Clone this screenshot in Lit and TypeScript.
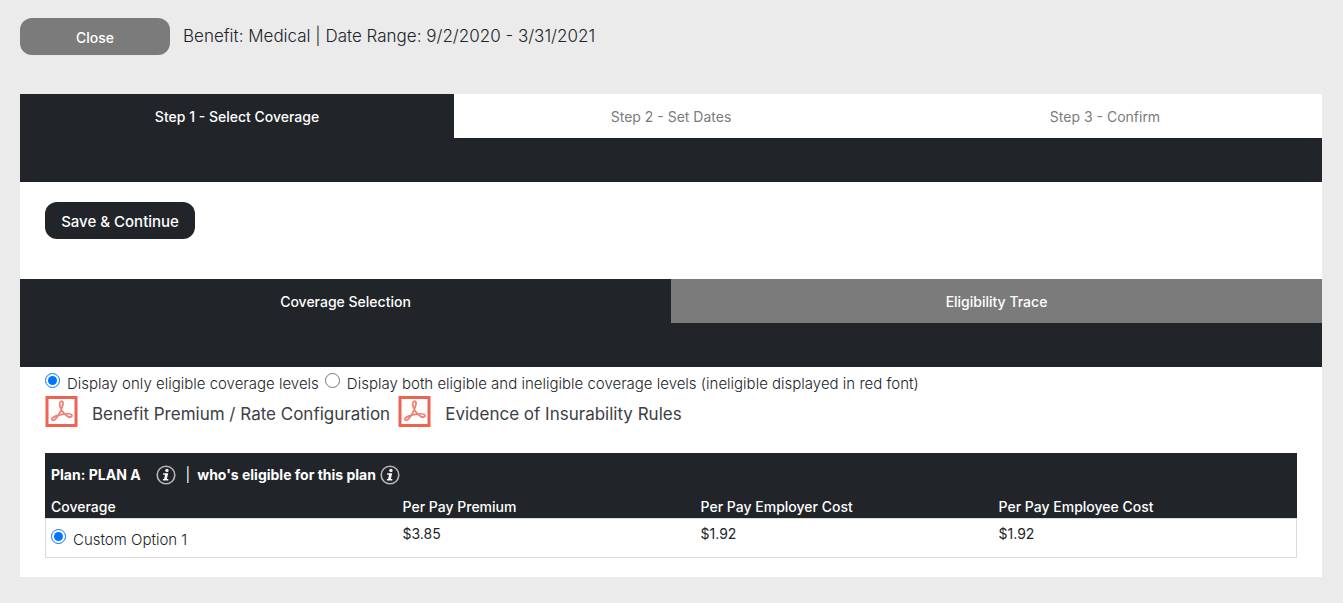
import { LitElement, html, css } from "lit";
import { customElement, state } from "lit/decorators.js";

const infoIcon = html`<svg class="info-icon" viewBox="0 0 20 20" role="img" aria-label="Information">
  <circle cx="10" cy="10" r="8.8" fill="none" stroke="#b4b6b8" stroke-width="1.6" />
  <circle cx="10.9" cy="5.4" r="1.7" fill="#fff" />
  <path d="M7.2 8.200h5l-1.400 5.700h1.500v1.500H6.900v-1.500h1.200l1-4.200H7.200z" fill="#fff" />
</svg>`;

const pdfIcon = html`<svg class="pdf-icon" viewBox="0 0 32 31" aria-hidden="true">
  <rect x="1.5" y="1.5" width="29" height="28" fill="#fff" stroke="#ee6352" stroke-width="3" />
  <path
    d="M15.400 5.500c1.500-.8 2.500.6 2.100 2.700-.8 4.500-4.300 11.700-7.700 15-1.500 1.500-3.300 1.400-3.500.2-.2-1.900 4.400-3.900 9.200-4.800 4.600-.9 10-1.200 10.800.5.700 1.700-1.500 2.600-3.800 1.500-4-1.900-7.700-7.800-8.300-11.700-.2-1.500.2-2.900 1.200-3.400z"
    fill="none" stroke="#f08073" stroke-width="1.8" />
</svg>`;

@customElement("app-root")
export class AppRoot extends LitElement {
  @state() private steps = ["Step 1 - Select Coverage", "Step 2 - Set Dates", "Step 3 - Confirm"];
  @state() private rows = [{ name: "Custom Option 1", costs: ["$3.85", "$1.92", "$1.92"] }];

  static styles = css`
    :host {
      display: block;
      box-sizing: border-box;
      min-height: 100vh;
      padding: 18px 21px 26px 20px;
      background: #ebebeb;
      color: #212529;
      font-family: Inter, "Open Sans", sans-serif;
      font-size: 14px;
      line-height: 20px;
    }
    * { box-sizing: border-box; }
    button { font: inherit; border: 0; margin: 0; cursor: pointer; }
    .top { display: flex; gap: 13px; margin-bottom: 39px; }
    .heading { margin: 0; font-size: 17px; font-weight: 300; line-height: 36px; }
    .action {
      width: 150px;
      height: 37px;
      padding: 2px 0 0;
      border-radius: 12px;
      background: #212529;
      color: #fff;
      font-size: 15px;
      font-weight: 500;
    }
    .close { background: #7b7b7b; font-size: 14px; }
    .panel { background: #fff; padding-bottom: 19px; }
    .tabs { display: flex; background: #212529; padding-bottom: 44px; }
    .tab {
      flex: 1;
      height: 44px;
      padding: 2px 0 0;
      background: #fff;
      color: #7b7b7b;
    }
    .tab.muted { background: #7b7b7b; color: #fff; font-weight: 500; }
    .tab.active { background: #212529; color: #fff; font-weight: 500; }
    .save { padding: 20px 25px 40px; }
    .content { padding: 4px 25px 0; }
    .choices { display: flex; height: 25px; gap: 6px; }
    .choice { display: flex; gap: 7px; font-size: 15px; font-weight: 300; }
    .choice span { padding-top: 3px; }
    input[type="radio"] { flex: none; width: 15px; height: 15px; margin: 2px 0 0; accent-color: #0075ff; }
    .links { display: flex; gap: 8px; margin-bottom: 26px; }
    .links a {
      display: flex;
      gap: 14px;
      color: #3c4045;
      text-decoration: none;
      font-size: 17px;
      font-weight: 400;
      line-height: 36px;
      height: 31px;
    }
    .pdf-icon { width: 33px; height: 31px; }
    table { width: 100%; border-collapse: separate; border-spacing: 0; table-layout: fixed; }
    .c1 { width: 28%; }
    .c2 { width: 298px; }
    thead { background: #212529; color: #fff; }
    th { padding: 0 7px; text-align: left; font-weight: 500; height: 23px; line-height: 23px; }
    th:first-child { padding-left: 6px; }
    .plan { height: 42px; font-weight: 700; }
    .plan-line { display: flex; align-items: center; }
    .plan-line .sep { margin: 0 7px 0 10px; font-weight: 400; }
    .info-icon { width: 20px; height: 20px; margin-top: 2px; }
    .name { margin-right: 15px; }
    .who { margin-right: 4px; }
    td {
      padding: 5px 7px;
      height: 40px;
      vertical-align: top;
      border: solid #dcdcdc;
      border-width: 1px 0;
    }
    td:first-child { border-left-width: 1px; padding-left: 5px; }
    td:last-child { border-right-width: 1px; }
    td .choice { padding-top: 3px; }
  `;

  render() {
    return html`
      <header class="top">
        <button class="action close" type="button">Close</button>
        <h1 class="heading">Benefit: Medical | Date Range: 9/2/2020 - 3/31/2021</h1>
      </header>
      <main class="panel">
        <nav class="tabs" aria-label="Steps">
          ${this.steps.map((s, i) => html`<button type="button" class="tab ${i === 0 ? "active" : ""}">${s}</button>`)}
        </nav>
        <div class="save"><button class="action" type="button">Save &amp; Continue</button></div>
        <nav class="tabs" aria-label="Coverage">
          <button type="button" class="tab active">Coverage Selection</button>
          <button type="button" class="tab muted">Eligibility Trace</button>
        </nav>
        <section class="content">
          <div class="choices">
            <label class="choice"><input type="radio" name="display" checked /><span>Display only eligible coverage levels</span></label>
            <label class="choice"><input type="radio" name="display" /><span>Display both eligible and ineligible coverage levels (ineligible displayed in red font)</span></label>
          </div>
          <div class="links">
            <a href="#premium">${pdfIcon}<span>Benefit Premium / Rate Configuration</span></a>
            <a href="#evidence">${pdfIcon}<span>Evidence of Insurability Rules</span></a>
          </div>
          <table>
            <colgroup><col class="c1" /><col class="c2" /><col class="c2" /><col /></colgroup>
            <thead>
              <tr>
                <th class="plan" colspan="4">
                  <div class="plan-line">
                    <span class="name">Plan: PLAN A</span>${infoIcon}<span class="sep">|</span
                    ><span class="who">who's eligible for this plan</span>${infoIcon}
                  </div>
                </th>
              </tr>
              <tr>
                <th>Coverage</th>
                <th>Per Pay Premium</th>
                <th>Per Pay Employer Cost</th>
                <th>Per Pay Employee Cost</th>
              </tr>
            </thead>
            <tbody>
              ${this.rows.map((r) => html`<tr>
                <td><label class="choice"><input type="radio" name="option" checked /><span>${r.name}</span></label></td>
                ${r.costs.map((c) => html`<td>${c}</td>`)}
              </tr>`)}
            </tbody>
          </table>
        </section>
      </main>
    `;
  }
}
